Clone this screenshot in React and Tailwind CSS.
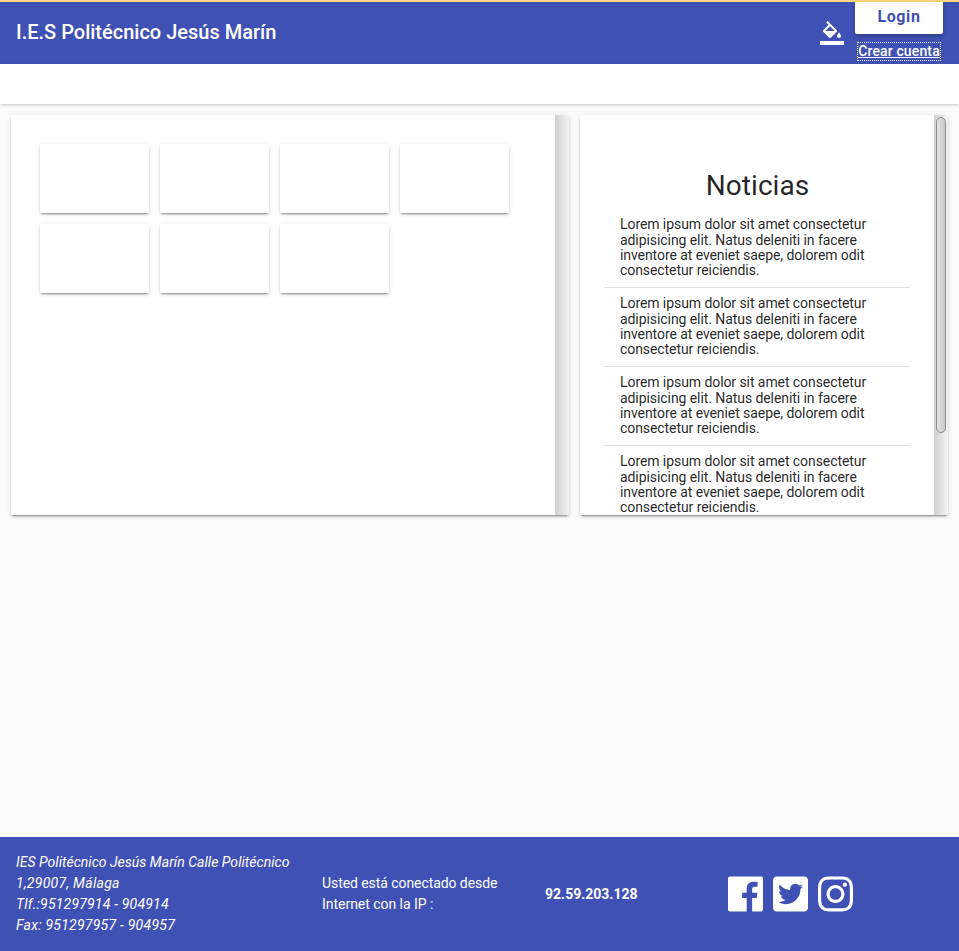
import { FaTwitterSquare, FaInstagram } from 'react-icons/fa';

const raised =
  'rounded-[2px] bg-white shadow-[0_2px_2px_0_rgba(0,0,0,0.14),0_3px_1px_-2px_rgba(0,0,0,0.2),0_1px_5px_0_rgba(0,0,0,0.12)]';

const news = [1, 2, 3, 4];

function FillIcon() {
  return (
    <svg viewBox="0 0 24 24" className="size-6 fill-white">
      <path d="M16.56 8.94L7.62 0 6.21 1.41l2.38 2.38-5.15 5.15c-.59.59-.59 1.54 0 2.12l5.5 5.5c.29.29.68.44 1.06.44s.77-.15 1.06-.44l5.5-5.5c.59-.58.59-1.53 0-2.12zM5.21 10L10 5.21 14.79 10H5.21zM19 11.5s-2 2.17-2 3.5c0 1.1.9 2 2 2s2-.9 2-2c0-1.33-2-3.5-2-3.5zM0 20h24v4H0v-4z" />
    </svg>
  );
}

function FacebookIcon() {
  return (
    <svg viewBox="0 0 448 512" className="h-10 w-[35px] fill-white">
      <path d="M448 56.7v398.5c0 13.7-11.1 24.7-24.7 24.7H309.1V306.5h58.2l8.7-67.600h-67v-43.200c0-19.600 5.400-32.900 33.500-32.900h35.800v-60.500c-6.200-.8-27.400-2.700-52.200-2.700-51.600 0-87 31.500-87 89.400v49.900h-58.400v67.600h58.400V480H24.7C11.100 480 0 468.900 0 455.300V56.700C0 43.100 11.100 32 24.700 32h398.500c13.700 0 24.800 11.100 24.800 24.700z" />
    </svg>
  );
}

function Track({ children }) {
  return (
    <div className="w-[14px] shrink-0 bg-linear-to-r from-[#cfcfcf] to-[#f4f4f4] px-[2px] pt-[2px]">
      {children}
    </div>
  );
}

export default function App() {
  return (
    <div className="flex h-[951px] w-[959px] flex-col overflow-hidden bg-[#fafafa] font-[Roboto,sans-serif] text-sm text-black/87">
      <header className="flex h-16 shrink-0 items-start justify-between border-t-2 border-[#ffd77f] bg-[#3f51b5] pr-4 pl-4 text-white">
        <h1 className="mt-4 text-[20px] leading-7 font-medium">I.E.S Politécnico Jesús Marín</h1>
        <div className="flex">
          <div className="mt-[19px] mr-[11px]">
            <FillIcon />
          </div>
          <div className="flex w-[88px] flex-col items-center">
            <button className="h-8 w-full rounded-b-[2px] bg-white pb-[2px] text-base font-bold tracking-[0.6px] text-[#3f51b5] shadow-[0_2px_5px_0_rgba(0,0,0,0.26)]">
              Login
            </button>
            <a className="mt-2 h-[19px] border border-dotted border-white text-sm leading-[17px] font-medium tracking-[0.14px] whitespace-nowrap underline">
              Crear cuenta
            </a>
          </div>
        </div>
      </header>
      <nav className="h-10 shrink-0 bg-white shadow-[0_2px_2px_-1px_rgba(0,0,0,0.17),0_1px_5px_0_rgba(0,0,0,0.06)]" />
      <main className="flex grow items-start gap-[11px] px-[11px] pt-[11px]">
        <section className={`flex h-[400px] w-[558px] overflow-hidden ${raised}`}>
          <div className="flex grow flex-wrap content-start gap-[11px] pt-[29px] pl-[29px]">
            {[1, 2, 3, 4, 5, 6, 7].map((n) => (
              <div key={n} className={`h-[69px] w-[109px] ${raised}`} />
            ))}
          </div>
          <Track />
        </section>
        <section className={`flex h-[400px] w-[368px] overflow-hidden ${raised}`}>
          <div className="grow px-6">
            <h2 className="mt-[55px] pl-px text-center text-[28px] leading-8 tracking-[0.05px]">Noticias</h2>
            <ul className="mt-[7px]">
              {news.map((n) => (
                <li
                  key={n}
                  className="h-[79px] border-b border-black/12 px-4 pt-[8.45px] leading-[15.3px] tracking-[-0.073px]"
                >
                  Lorem ipsum dolor sit amet consectetur adipisicing elit. Natus deleniti in facere inventore at
                  eveniet saepe, dolorem odit consectetur reiciendis.
                </li>
              ))}
            </ul>
          </div>
          <Track>
            <div className="h-[316px] w-[10px] rounded-[5px] border border-[#8e8e8e] bg-linear-to-r from-[#e4e4e4] to-[#c9c9c9]" />
          </Track>
        </section>
      </main>
      <footer className="flex h-[114px] shrink-0 items-center bg-[#3f51b5] pl-4 leading-[21px] text-white">
        <address className="w-[306px]">
          <span className="block tracking-[0.03px]">IES Politécnico Jesús Marín Calle Politécnico</span>
          <span className="block tracking-[0.28px]">1,29007, Málaga</span>
          <span className="block tracking-[0.2px]">Tlf.:951297914 - 904914</span>
          <span className="block tracking-[0.25px]">Fax: 951297957 - 904957</span>
        </address>
        <p className="w-[223px] tracking-[-0.07px]">
          Usted está conectado desde
          <br />
          <span className="tracking-[-0.03px]">Internet con la IP :</span>
        </p>
        <strong className="w-[183px] font-bold">92.59.203.128</strong>
        <div className="flex gap-[10px]">
          <FacebookIcon />
          <FaTwitterSquare className="h-10 w-[35px]" />
          <FaInstagram className="h-10 w-[35px]" />
        </div>
      </footer>
    </div>
  );
}
